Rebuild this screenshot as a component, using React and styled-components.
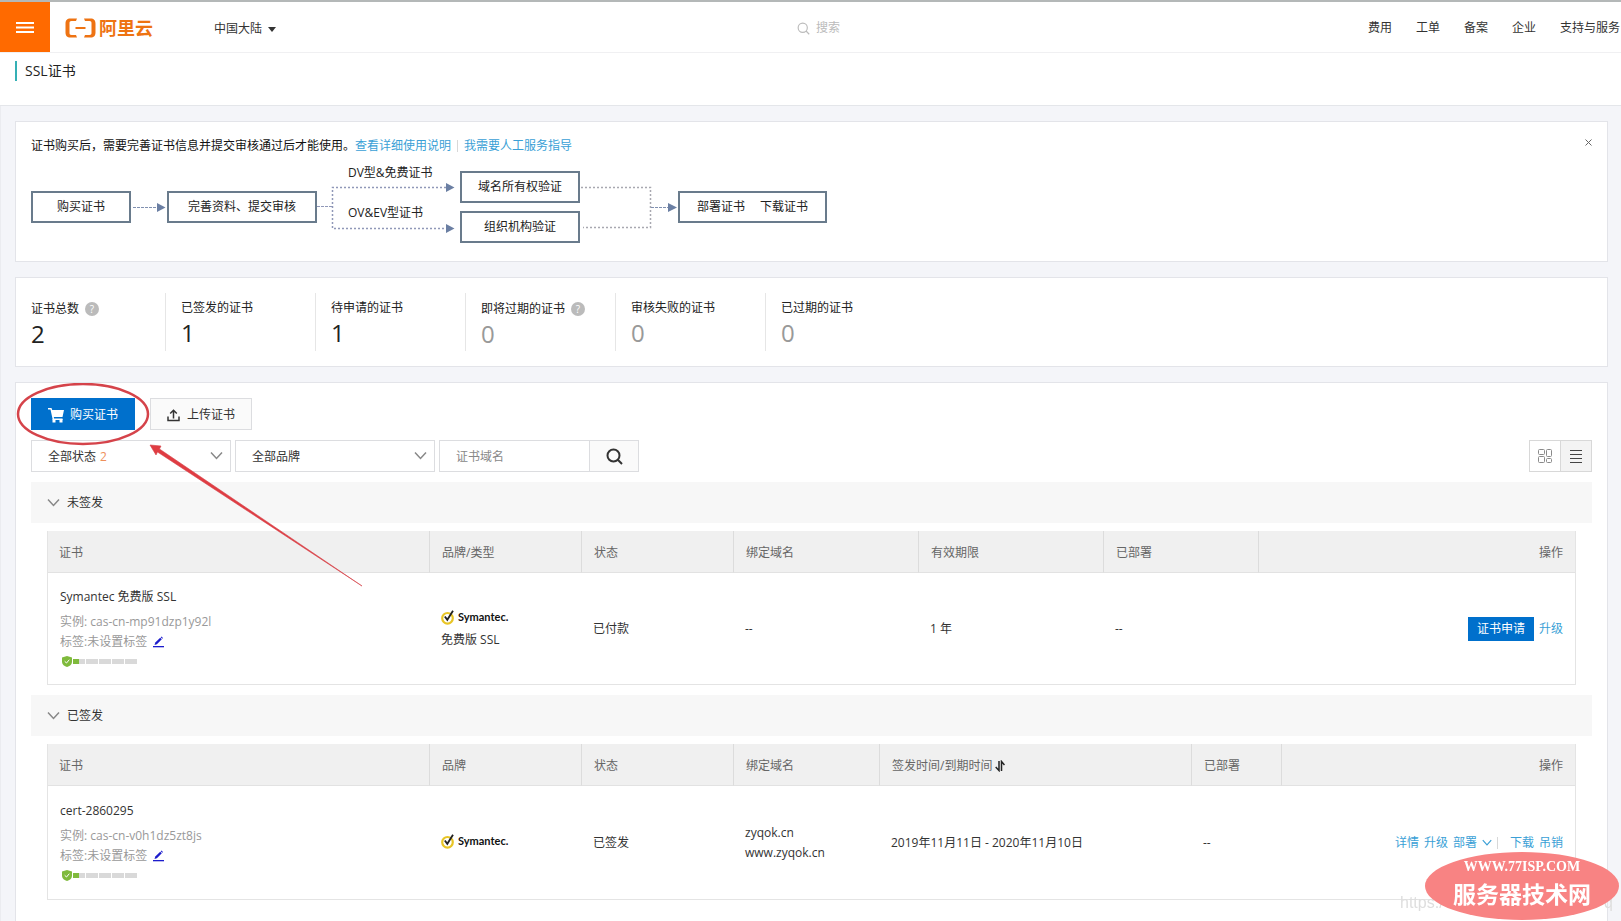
import React from 'react';
import styled, { createGlobalStyle } from 'styled-components';

const GlobalStyle = createGlobalStyle`
  * {
    box-sizing: border-box;
  }

  body {
    margin: 0;
    background: #f4f5f9;
    color: #333;
    font-family: 'Open Sans', 'Noto Sans CJK SC', sans-serif;
    font-size: 12px;
    line-height: 20px;
  }

  button,
  input,
  select {
    margin: 0;
    font: inherit;
    color: inherit;
  }

  button {
    padding: 0;
    border: 0;
    background: none;
    cursor: pointer;
  }

  svg {
    display: block;
    flex: none;
  }
`;

const Page = styled.div`
  min-height: 100vh;
  overflow: hidden;
`;

/* Top bar */

const TopBar = styled.header`
  display: flex;
  align-items: center;
  height: 53px;
  border-top: 2px solid #b4b8b8;
  border-bottom: 1px solid #f0f0f2;
  background: #fff;
`;

const MenuButton = styled.button`
  display: flex;
  align-items: center;
  justify-content: center;
  width: 50px;
  height: 50px;
  background: #ff6a00;
`;

const Brand = styled.a`
  display: flex;
  align-items: center;
  gap: 3px;
  margin-left: 15px;
  padding-top: 2px;
  color: #ee7312;
  font-size: 18px;
  font-weight: 700;
  text-decoration: none;
`;

const Region = styled.button`
  display: flex;
  align-items: center;
  gap: 6px;
  margin-left: 61px;
  padding-top: 4px;
`;

const HeaderSearch = styled.label`
  display: flex;
  flex: 1;
  align-items: center;
  gap: 6px;
  margin-left: 521px;
  padding-top: 2px;
  color: #bbb;
`;

const HeaderSearchInput = styled.input`
  width: 120px;
  padding: 0;
  border: 0;
  outline: 0;
  background: none;

  &::placeholder {
    color: #bbb;
    opacity: 1;
  }
`;

const Nav = styled.nav`
  display: flex;
  gap: 24px;
  padding: 2px 1px 0 0;
  white-space: nowrap;
`;

const NavLink = styled.a`
  color: #333;
  text-decoration: none;
`;

const TitleBar = styled.div`
  height: 53px;
  padding: 8px 15px;
  border-bottom: 1px solid #e4e6ea;
  background: #fff;
`;

const Title = styled.h1`
  margin: 0;
  padding-left: 8px;
  border-left: 2px solid #35b0b5;
  color: #222;
  font-size: 14px;
  font-weight: 400;
  line-height: 20px;
`;

/* Panels */

const Content = styled.main`
  display: flex;
  flex-direction: column;
  gap: 15px;
  padding: 15px 13px 0 14px;
  border-left: 1px solid #ebecf0;
`;

const Panel = styled.section`
  position: relative;
  padding: 15px;
  border: 1px solid #e3e4e9;
  background: #fff;
`;

const GuidePanel = styled(Panel)`
  padding: 14px 15px 10px;
`;

const GuideText = styled.p`
  display: flex;
  margin: 0 0 7px;
  color: #111;
`;

const TextLink = styled.a`
  color: #3a9fd6;
  text-decoration: none;
`;

const Divider = styled.span`
  width: 1px;
  height: 12px;
  margin: 4px 6px;
  background: #d8d8d8;
`;

const CloseButton = styled.button`
  position: absolute;
  top: 16px;
  right: 15px;
`;

const Flow = styled.div`
  display: flex;
  align-items: center;
  height: 88px;
`;

const Step = styled.div`
  display: flex;
  align-items: center;
  justify-content: center;
  gap: 15px;
  width: ${({ $width }) => $width}px;
  height: 32px;
  border: 2px solid #697b8c;
  color: #222;
`;

const StepStack = styled.div`
  display: flex;
  flex-direction: column;
  gap: 8px;
`;

const Branch = styled.div`
  position: relative;
  display: flex;
  flex-direction: column;
  gap: 20px;
  width: 143px;
  height: 88px;
  padding-left: 31px;
  color: #222;

  svg {
    position: absolute;
    top: 0;
    left: 0;
  }
`;

const StatsPanel = styled(Panel)`
  display: flex;
`;

const Stat = styled.div`
  width: 150px;
  height: 58px;
  padding: ${({ $help }) => ($help ? 6 : 5)}px 0 0 15px;
  border-right: 1px solid #e6e6e6;

  &:first-child {
    width: 135px;
    padding-left: 0;
  }

  &:last-child {
    border-right: 0;
  }
`;

const StatLabel = styled.div`
  display: flex;
  align-items: center;
  gap: 6px;
  color: #222;
`;

const StatValue = styled.div`
  color: ${({ $muted }) => ($muted ? '#999' : '#222')};
  font-size: 24px;
  line-height: 30px;
`;

const HelpDot = styled.span`
  width: 14px;
  height: 14px;
  border-radius: 50%;
  background: #bbb;
  color: #fff;
  font-size: 10px;
  line-height: 14px;
  text-align: center;
`;

/* Toolbar */

const Toolbar = styled.div`
  display: flex;
  gap: ${({ $gap }) => $gap}px;
  margin-bottom: 10px;
`;

const ToolButton = styled.button`
  display: flex;
  align-items: center;
  gap: 6px;
  height: 32px;
  padding: 2px 16px 0;
  border: 1px solid ${({ $primary }) => ($primary ? '#0070cc' : '#dcdde0')};
  background: ${({ $primary }) => ($primary ? '#0070cc' : '#fafafa')};
  color: ${({ $primary }) => ($primary ? '#fff' : '#333')};
`;

const SelectBox = styled.div`
  position: relative;
  width: 200px;

  svg {
    position: absolute;
    top: 11px;
    right: 8px;
    pointer-events: none;
  }
`;

const Select = styled.select`
  width: 100%;
  height: 32px;
  padding: 2px 32px 0 16px;
  border: 1px solid #dcdde0;
  border-radius: 0;
  outline: 0;
  background: #fff;
  appearance: none;
`;

const SelectCount = styled.span`
  position: absolute;
  top: 7px;
  left: 69px;
  color: #ee8f5b;
  pointer-events: none;
`;

const SearchGroup = styled.form`
  display: flex;
  height: 32px;
  border: 1px solid #dcdde0;
`;

const SearchInput = styled.input`
  width: 149px;
  padding: 2px 16px 0;
  border: 0;
  outline: 0;

  &::placeholder {
    color: #888;
    opacity: 1;
  }
`;

const SearchButton = styled.button`
  display: flex;
  align-items: center;
  justify-content: center;
  width: 49px;
  border-left: 1px solid #dcdde0;
  background: #fafafa;
`;

const ViewSwitch = styled.div`
  display: flex;
  margin-left: auto;
  border: 1px solid #d8d8d8;
`;

const ViewButton = styled.button`
  display: flex;
  align-items: center;
  justify-content: center;
  width: 30px;
  background: ${({ $active }) => ($active ? '#f3f3f3' : '#fff')};

  & + & {
    width: 31px;
    border-left: 1px solid #d8d8d8;
  }
`;

/* Certificate groups */

const GroupHeader = styled.button`
  display: flex;
  align-items: center;
  gap: 7px;
  width: 100%;
  height: 41px;
  padding: 0 16px;
  background: #f7f7f7;
`;

const GroupBody = styled.div`
  padding: 8px 16px 10px;
`;

const Table = styled.table`
  width: 100%;
  border: 1px solid #e4e4e4;
  border-width: 0 1px;
  border-spacing: 0;
  table-layout: fixed;
`;

const HeadCell = styled.th`
  width: ${({ $width }) => ($width ? `${$width}px` : 'auto')};
  height: 42px;
  padding: 2px 12px 0;
  border-right: 1px solid #dcdcdc;
  border-bottom: 1px solid #e2e2e2;
  background: #f0f0f0;
  color: #666;
  font-weight: 400;
  text-align: left;

  &:first-child {
    padding-left: 11px;
  }

  &:last-child {
    border-right: 0;
    text-align: right;
  }
`;

const Cell = styled.td`
  height: ${({ $height }) => $height}px;
  padding: 0 12px 0 11px;
  border-bottom: 1px solid #e4e4e4;
  vertical-align: middle;

  &:first-child {
    padding-left: 12px;
  }
`;

const HeadLabel = styled.span`
  display: flex;
  align-items: center;
  gap: 3px;
`;

const CertName = styled.div`
  margin-bottom: 5px;
`;

const CertMeta = styled.div`
  display: flex;
  align-items: center;
  gap: 6px;
  height: 20px;
  color: #999;
`;

const Strength = styled.div`
  display: flex;
  align-items: center;
  gap: 1px;
  height: 19px;
  padding-left: 2px;
`;

const StrengthBar = styled.span`
  width: 12px;
  height: 5px;
  background: ${({ $half }) =>
    $half ? 'linear-gradient(90deg, #7fba3c 50%, #d9d9d9 50%)' : '#d9d9d9'};
`;

const Vendor = styled.div`
  display: flex;
  align-items: center;
  gap: 2px;
  height: 20px;
  margin-bottom: 3px;
  color: #111;
  font-family: Lato, sans-serif;
  font-size: 11px;
  font-weight: 700;
`;

const Actions = styled.div`
  display: flex;
  align-items: center;
  justify-content: flex-end;
  gap: 5px;
`;

const ActionDivider = styled(Divider)`
  margin: 0 7px 0 0;
`;

const ApplyButton = styled.button`
  width: 66px;
  height: 24px;
  background: #0070cc;
  color: #fff;
`;

/* Overlays */

const Annotation = styled.svg`
  position: absolute;
  top: 0;
  left: 0;
  pointer-events: none;
`;

const Stamp = styled.div`
  position: fixed;
  right: 2px;
  bottom: 1px;
  display: flex;
  flex-direction: column;
  align-items: center;
  width: 194px;
  height: 68px;
  padding-top: 5px;
  border-radius: 50%;
  background: #f88383;
  color: #fff;
  pointer-events: none;
`;

const StampUrl = styled.span`
  font-family: 'Liberation Serif', serif;
  font-size: 14px;
  font-weight: 700;
  line-height: 20px;
`;

const StampName = styled.span`
  font-family: 'Noto Sans CJK SC', sans-serif;
  font-size: 23px;
  font-weight: 700;
  line-height: 32px;
`;

const SourceUrl = styled.div`
  position: fixed;
  right: 8px;
  bottom: 8px;
  display: flex;
  justify-content: space-between;
  width: 213px;
  color: #dedede;
  font-family: 'Liberation Sans', sans-serif;
  font-size: 16px;
  pointer-events: none;
`;

/* Icons */

const BrandMark = () => (
  <svg width="31" height="20" viewBox="0 0 31 20" fill="currentColor">
    <path d="M12 0.500H5.500C2 0.500 0.500 2.500 0.500 5.500V14.500C0.500 17.500 2 19.500 5.500 19.500H12L11 17H6.500C5 17 4.500 16.300 4.500 15V5C4.500 3.700 5 3 6.500 3H11Z" />
    <path d="M19 0.500H25.500C29 0.500 30.500 2.500 30.500 5.500V14.500C30.500 17.500 29 19.500 25.500 19.500H19L20 17H24.500C26 17 26.500 16.300 26.500 15V5C26.500 3.700 26 3 24.500 3H20Z" />
    <rect x="10.500" y="9" width="10" height="2" />
  </svg>
);

const Chevron = ({ color = '#888', size = 13 }) => (
  <svg width={size} height={size === 13 ? 9 : 7} viewBox="0 0 13 9" fill="none" stroke={color} strokeWidth="1.500">
    <path d="M1 1.500L6.500 7.500L12 1.500" />
  </svg>
);

const SearchIcon = ({ size = 17, width = 2 }) => (
  <svg width={size} height={size} viewBox="0 0 17 17" fill="none" stroke="currentColor" strokeWidth={width}>
    <circle cx="7.500" cy="7.500" r="6" />
    <path d="M11.800 11.800L16 16" />
  </svg>
);

const CartIcon = () => (
  <svg width="16" height="15" viewBox="0 0 16 15" fill="#fff">
    <path d="M0 0H3.500L4.200 2H16L14.500 9H5.800L6.100 10.500H14.500V12H4.800L2.500 1.500H0Z" />
    <rect x="4.500" y="11" width="3" height="3.500" />
    <rect x="11.500" y="11" width="3" height="3.500" />
  </svg>
);

const UploadIcon = () => (
  <svg width="14" height="13" viewBox="0 0 14 13" fill="none" stroke="#333" strokeWidth="1.500">
    <path d="M1 7.500V11.500H12V7.500" />
    <path d="M6.500 9.500V1.500M3.200 4.500L6.500 1.200L9.800 4.500" />
  </svg>
);

const GridIcon = () => (
  <svg width="14" height="14" viewBox="0 0 14 14" fill="none" stroke="#8a8a8a">
    <rect x="0.500" y="0.500" width="6" height="5" rx="1" />
    <rect x="0.500" y="7.500" width="6" height="6" rx="1" />
    <rect x="8.500" y="0.500" width="5" height="7" rx="1" />
    <rect x="8.500" y="9.500" width="5" height="4" rx="1" />
  </svg>
);

const ListIcon = () => (
  <svg width="12" height="13" viewBox="0 0 12 13" stroke="#444">
    <path d="M0 0.500H12M0 4.500H12M0 8.500H12M0 12.500H12" />
  </svg>
);

const PenIcon = () => (
  <svg width="11" height="12" viewBox="0 0 11 12" fill="#1c1ccc">
    <path d="M1.500 9L2.300 6.600L7.200 1.700L8.800 3.300L3.900 8.200Z" />
    <path d="M7.700 1.200L8.400 0.500L10 2.100L9.300 2.800Z" />
    <rect x="0" y="10" width="11" height="1.300" />
  </svg>
);

const ShieldIcon = () => (
  <svg width="10" height="11" viewBox="0 0 10 11">
    <path d="M5 0L10 1.500V6C10 8.500 7.500 10.300 5 11C2.500 10.300 0 8.500 0 6V1.500Z" fill="#7fba3c" />
    <path d="M2.700 5.300L4.500 7L7.300 3.700" fill="none" stroke="#fff" />
  </svg>
);

const VendorMark = () => (
  <svg width="15" height="15" viewBox="0 0 15 15" fill="none">
    <circle cx="6.500" cy="8.300" r="5.300" stroke="#e8c526" strokeWidth="2.200" />
    <path d="M3.800 6.500L6.300 9.800L12 0.800" stroke="#222" strokeWidth="1.800" />
  </svg>
);

const SortIcon = () => (
  <svg width="10" height="12" viewBox="0 0 10 12" fill="none" stroke="#222" strokeWidth="1.500">
    <path d="M4 1V10.500L0.700 7" />
    <path d="M6.500 11V1.500L9.500 5" />
  </svg>
);

const Arrow = () => (
  <svg width="36" height="10" viewBox="0 0 36 10">
    <path d="M2 5.500H27" stroke="#8090b0" strokeDasharray="3 1" />
    <path d="M26 1L34.500 5.500L26 10Z" fill="#6b7fa3" />
  </svg>
);

const BranchLines = () => (
  <svg width="143" height="88" viewBox="0 0 143 88" fill="none" stroke="#9098b8">
    <path d="M0 43.500H15" strokeDasharray="3 1" />
    <path d="M129 24.500H15.500V65.500H129" strokeDasharray="2 2" strokeWidth="1.500" />
    <path d="M129 20L137.500 24.500L129 29ZM129 61L137.500 65.500L129 70Z" fill="#6b7fa3" stroke="none" />
  </svg>
);

const MergeLines = () => (
  <svg width="98" height="88" viewBox="0 0 98 88" fill="none" stroke="#a8a8b0">
    <path d="M1 24.500H70.500V64.500H3" strokeDasharray="2 2" strokeWidth="1.500" />
    <path d="M71 44.500H88" stroke="#8090b0" strokeDasharray="3 1" />
    <path d="M88 40L97 44.500L88 49Z" fill="#6b7fa3" stroke="none" />
  </svg>
);

const navItems = ['费用', '工单', '备案', '企业', '支持与服务'];

const stats = [
  { label: '证书总数', value: 2, help: true },
  { label: '已签发的证书', value: 1 },
  { label: '待申请的证书', value: 1 },
  { label: '即将过期的证书', value: 0, help: true },
  { label: '审核失败的证书', value: 0 },
  { label: '已过期的证书', value: 0 },
];

const CertInfo = ({ name, instance }) => (
  <>
    <CertName>{name}</CertName>
    <CertMeta>实例: {instance}</CertMeta>
    <CertMeta>
      标签:未设置标签
      <button type="button" aria-label="编辑标签">
        <PenIcon />
      </button>
    </CertMeta>
    <Strength>
      <ShieldIcon />
      <StrengthBar $half />
      <StrengthBar />
      <StrengthBar />
      <StrengthBar />
      <StrengthBar />
    </Strength>
  </>
);

const VendorLogo = () => (
  <Vendor>
    <VendorMark />
    Symantec.
  </Vendor>
);

const Group = ({ title, columns, height, cells }) => (
  <>
    <GroupHeader type="button">
      <Chevron />
      {title}
    </GroupHeader>
    <GroupBody>
      <Table>
        <thead>
          <tr>
            {columns.map(({ label, width }, index) => (
              <HeadCell key={index} $width={width}>
                {label}
              </HeadCell>
            ))}
          </tr>
        </thead>
        <tbody>
          <tr>
            {cells.map((cell, index) => (
              <Cell key={index} $height={height}>
                {cell}
              </Cell>
            ))}
          </tr>
        </tbody>
      </Table>
    </GroupBody>
  </>
);

const pendingColumns = [
  { label: '证书', width: 382 },
  { label: '品牌/类型', width: 152 },
  { label: '状态', width: 152 },
  { label: '绑定域名', width: 185 },
  { label: '有效期限', width: 185 },
  { label: '已部署', width: 155 },
  { label: '操作' },
];

const issuedColumns = [
  { label: '证书', width: 382 },
  { label: '品牌', width: 152 },
  { label: '状态', width: 152 },
  { label: '绑定域名', width: 146 },
  {
    label: (
      <HeadLabel>
        签发时间/到期时间
        <SortIcon />
      </HeadLabel>
    ),
    width: 312,
  },
  { label: '已部署', width: 90 },
  { label: '操作' },
];

const App = () => {
  return (
    <Page>
      <GlobalStyle />
      <TopBar>
        <MenuButton type="button" aria-label="菜单">
          <svg width="18" height="11" viewBox="0 0 18 11" stroke="#fff" strokeWidth="2">
            <path d="M0 1H18M0 5.500H18M0 10H18" />
          </svg>
        </MenuButton>
        <Brand href="#">
          <BrandMark />
          阿里云
        </Brand>
        <Region type="button">
          中国大陆
          <svg width="8" height="5" viewBox="0 0 8 5" fill="#333">
            <path d="M0 0H8L4 5Z" />
          </svg>
        </Region>
        <HeaderSearch>
          <SearchIcon size={13} width={1.5} />
          <HeaderSearchInput type="text" placeholder="搜索" aria-label="搜索" />
        </HeaderSearch>
        <Nav>
          {navItems.map((item) => (
            <NavLink key={item} href="#">
              {item}
            </NavLink>
          ))}
        </Nav>
      </TopBar>
      <TitleBar>
        <Title>SSL证书</Title>
      </TitleBar>

      <Content>
        <GuidePanel>
          <GuideText>
            证书购买后，需要完善证书信息并提交审核通过后才能使用。
            <TextLink href="#">查看详细使用说明</TextLink>
            <Divider />
            <TextLink href="#">我需要人工服务指导</TextLink>
          </GuideText>
          <CloseButton type="button" aria-label="关闭">
            <svg width="7" height="9" viewBox="0 0 7 9" stroke="#666">
              <path d="M0.500 1.500L6.500 7.500M6.500 1.500L0.500 7.500" />
            </svg>
          </CloseButton>
          <Flow>
            <Step $width={100}>购买证书</Step>
            <Arrow />
            <Step $width={150}>完善资料、提交审核</Step>
            <Branch>
              <BranchLines />
              <span>DV型&amp;免费证书</span>
              <span>OV&amp;EV型证书</span>
            </Branch>
            <StepStack>
              <Step $width={120}>域名所有权验证</Step>
              <Step $width={120}>组织机构验证</Step>
            </StepStack>
            <MergeLines />
            <Step $width={149}>
              <span>部署证书</span>
              <span>下载证书</span>
            </Step>
          </Flow>
        </GuidePanel>

        <StatsPanel>
          {stats.map(({ label, value, help }) => (
            <Stat key={label} $help={help}>
              <StatLabel>
                {label}
                {help && <HelpDot>?</HelpDot>}
              </StatLabel>
              <StatValue $muted={value === 0}>{value}</StatValue>
            </Stat>
          ))}
        </StatsPanel>

        <Panel>
          <Toolbar $gap={15}>
            <ToolButton type="button" $primary>
              <CartIcon />
              购买证书
            </ToolButton>
            <ToolButton type="button">
              <UploadIcon />
              上传证书
            </ToolButton>
          </Toolbar>
          <Toolbar $gap={4}>
            <SelectBox>
              <Select aria-label="证书状态">
                <option>全部状态</option>
              </Select>
              <SelectCount>2</SelectCount>
              <Chevron />
            </SelectBox>
            <SelectBox>
              <Select aria-label="证书品牌">
                <option>全部品牌</option>
              </Select>
              <Chevron />
            </SelectBox>
            <SearchGroup>
              <SearchInput type="text" placeholder="证书域名" aria-label="证书域名" />
              <SearchButton type="button" aria-label="查询">
                <SearchIcon />
              </SearchButton>
            </SearchGroup>
            <ViewSwitch>
              <ViewButton type="button" aria-label="卡片视图">
                <GridIcon />
              </ViewButton>
              <ViewButton type="button" aria-label="列表视图" $active>
                <ListIcon />
              </ViewButton>
            </ViewSwitch>
          </Toolbar>

          <Group
            title="未签发"
            columns={pendingColumns}
            height={112}
            cells={[
              <CertInfo name="Symantec 免费版 SSL" instance="cas-cn-mp91dzp1y92l" />,
              <>
                <VendorLogo />
                免费版 SSL
              </>,
              '已付款',
              '--',
              '1 年',
              '--',
              <Actions>
                <ApplyButton type="button">证书申请</ApplyButton>
                <TextLink href="#">升级</TextLink>
              </Actions>,
            ]}
          />
          <Group
            title="已签发"
            columns={issuedColumns}
            height={114}
            cells={[
              <CertInfo name="cert-2860295" instance="cas-cn-v0h1dz5zt8js" />,
              <VendorLogo />,
              '已签发',
              <>
                zyqok.cn
                <br />
                www.zyqok.cn
              </>,
              '2019年11月11日 - 2020年11月10日',
              '--',
              <Actions>
                <TextLink href="#">详情</TextLink>
                <TextLink href="#">升级</TextLink>
                <TextLink href="#">部署</TextLink>
                <Chevron color="#3a9fd6" size={10} />
                <ActionDivider />
                <TextLink href="#">下载</TextLink>
                <TextLink href="#">吊销</TextLink>
              </Actions>,
            ]}
          />

          {/* hand-drawn marker pointing at the buy button */}
          <Annotation width="360" height="220" viewBox="0 0 360 220">
            <ellipse cx="67" cy="31" rx="65" ry="30" fill="none" stroke="#d5434a" strokeWidth="2.500" />
            <path d="M134 62L145 63L143.500 66L346 203L141.500 69L140 72Z" fill="#e03c42" stroke="#d5434a" strokeWidth="0.600" />
          </Annotation>
        </Panel>
      </Content>

      <SourceUrl>
        <span>https:/</span>
        <span>q</span>
      </SourceUrl>
      <Stamp>
        <StampUrl>WWW.77ISP.COM</StampUrl>
        <StampName>服务器技术网</StampName>
      </Stamp>
    </Page>
  );
};

export default App;
